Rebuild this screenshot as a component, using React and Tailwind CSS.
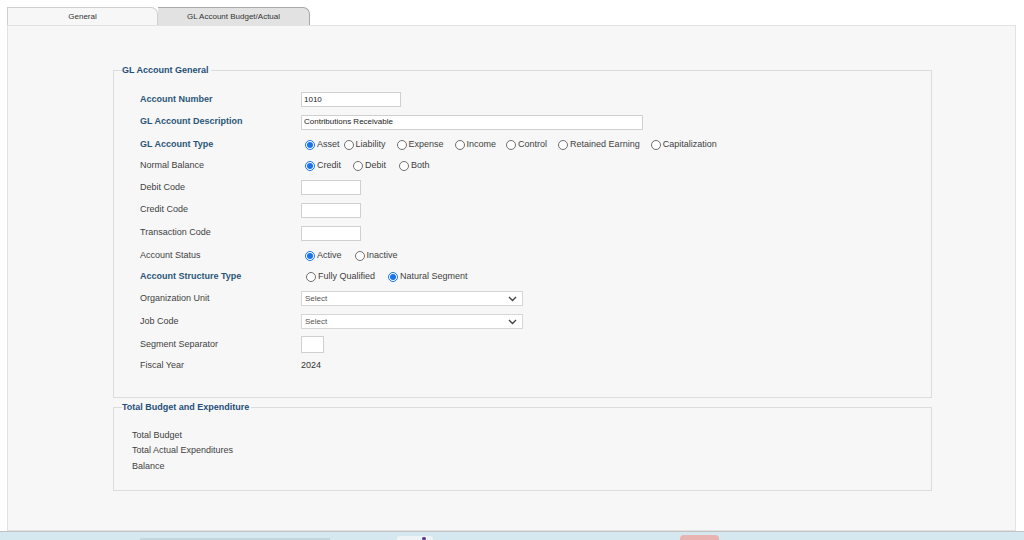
import React from 'react';

const blueLabel = 'font-bold text-[#2b5677]';
const plainLabel = 'text-[#3f3f3f]';

const Radio = ({ checked, label, className = '' }) => (
  <span className={`inline-flex items-center ${className}`}>
    <span
      className={`w-[10px] h-[10px] rounded-full border flex items-center justify-center bg-white ${
        checked ? 'border-[#1a73e8]' : 'border-[#6f6f6f]'
      }`}
    >
      {checked && <span className="w-[6px] h-[6px] rounded-full bg-[#1a73e8]" />}
    </span>
    <span className="ml-[2px] text-[#3f3f3f]">{label}</span>
  </span>
);

const TextBox = ({ value = '', width }) => (
  <div className={`${width} h-[15px] bg-white border border-[#d0d0d0] flex items-center pl-[2px] text-[8px] text-[#222]`}>
    {value}
  </div>
);

const SelectBox = () => (
  <div className="w-[222px] h-[15px] bg-white border border-[#d6d6d6] flex items-center justify-between pl-[3px] pr-[5px] text-[8px] text-[#555]">
    <span>Select</span>
    <svg width="9" height="6" viewBox="0 0 9 6" fill="none">
      <path d="M1 1l3.5 3.5L8 1" stroke="#444" strokeWidth="1.4" />
    </svg>
  </div>
);

const Row = ({ label, bold, h, children }) => (
  <div className={`flex items-center ${h}`}>
    <div className={`w-[161px] ${bold ? blueLabel : plainLabel}`}>{label}</div>
    <div className="flex items-center">{children}</div>
  </div>
);

export default function App() {
  return (
    <div className="w-[1024px] h-[540px] bg-white overflow-hidden flex flex-col text-[9px] font-['Liberation_Sans',Arial,sans-serif]">
      {/* tabs */}
      <div className="flex pl-[7px] pt-[7px] h-[25px] shrink-0">
        <div className="w-[151px] h-[18px] bg-[#f7f7f7] border border-b-0 border-[#cfcfcf] rounded-tr-[7px] flex items-center justify-center text-[8px] text-[#333]">
          General
        </div>
        <div className="w-[152px] h-[18px] bg-[#e2e2e2] border border-b-0 border-l-0 border-[#a9a9a9] rounded-tr-[7px] flex items-center justify-center text-[8px] text-[#333]">
          GL Account Budget/Actual
        </div>
      </div>

      {/* panel */}
      <div className="ml-[7px] mr-[8px] h-[506px] shrink-0 bg-[#f7f7f7] border border-[#e2e2e2] pl-[105px] pt-[38px]">
        <fieldset className="w-[819px] h-[334px] border border-[#dcdcdc] p-0 m-0">
          <legend className="ml-[8px] pr-[2px] text-[9px] font-bold text-[#1f4f79]">GL Account General</legend>
          <div className="pl-[26px] pt-[11px]">
            <Row label="Account Number" bold h="h-[22px]">
              <TextBox value="1010" width="w-[100px]" />
            </Row>
            <Row label="GL Account Description" bold h="h-[23px]">
              <TextBox value="Contributions Receivable" width="w-[342px]" />
            </Row>
            <Row label="GL Account Type" bold h="h-[22px]">
              <span className="pl-[4px] flex items-center">
                <Radio checked label="Asset" />
                <Radio label="Liability" className="ml-[4px]" />
                <Radio label="Expense" className="ml-[11px]" />
                <Radio label="Income" className="ml-[11px]" />
                <Radio label="Control" className="ml-[10px]" />
                <Radio label="Retained Earning" className="ml-[11px]" />
                <Radio label="Capitalization" className="ml-[11px]" />
              </span>
            </Row>
            <Row label="Normal Balance" h="h-[21px]">
              <span className="pl-[4px] flex items-center">
                <Radio checked label="Credit" />
                <Radio label="Debit" className="ml-[12px]" />
                <Radio label="Both" className="ml-[13px]" />
              </span>
            </Row>
            <Row label="Debit Code" h="h-[22px]">
              <TextBox width="w-[60px]" />
            </Row>
            <Row label="Credit Code" h="h-[23px]">
              <TextBox width="w-[60px]" />
            </Row>
            <Row label="Transaction Code" h="h-[23px]">
              <TextBox width="w-[60px]" />
            </Row>
            <Row label="Account Status" h="h-[22px]">
              <span className="pl-[4px] flex items-center">
                <Radio checked label="Active" />
                <Radio label="Inactive" className="ml-[13px]" />
              </span>
            </Row>
            <Row label="Account Structure Type" bold h="h-[21px]">
              <span className="pl-[5px] flex items-center">
                <Radio label="Fully Qualified" />
                <Radio checked label="Natural Segment" className="ml-[13px]" />
              </span>
            </Row>
            <Row label="Organization Unit" h="h-[22px]">
              <SelectBox />
            </Row>
            <Row label="Job Code" h="h-[24px]">
              <SelectBox />
            </Row>
            <Row label="Segment Separator" h="h-[22px]">
              <div className="w-[23px] h-[17px] bg-white border border-[#d0d0d0]" />
            </Row>
            <Row label="Fiscal Year" h="h-[21px]">
              <span className="text-[#333]">2024</span>
            </Row>
          </div>
        </fieldset>

        <fieldset className="mt-[3px] w-[819px] h-[90px] border border-[#dcdcdc] p-0 m-0">
          <legend className="ml-[8px] pr-[2px] text-[9px] font-bold text-[#1f4f79]">Total Budget and Expenditure</legend>
          <div className="pl-[18px] pt-[13px] flex flex-col text-[#3f3f3f] leading-[15.5px]">
            <span>Total Budget</span>
            <span>Total Actual Expenditures</span>
            <span>Balance</span>
          </div>
        </fieldset>
      </div>

      {/* bottom strip */}
      <div className="flex-1 border-t border-[#c2c2c2] bg-[#d6e8ef] flex items-end">
        <div className="ml-[140px] w-[190px] h-[2px] bg-[#c4d6dd]" />
        <div className="ml-[67px] w-[36px] h-[4px] bg-[#eef3f6] rounded-t-[3px] flex justify-end pr-[7px]">
          <div className="w-[4px] h-[3px] mt-[1px] rounded-full bg-[#5b3b8c]" />
        </div>
        <div className="ml-[247px] w-[39px] h-[5px] bg-[#e8b3b0] rounded-t-[4px]" />
      </div>
    </div>
  );
}
